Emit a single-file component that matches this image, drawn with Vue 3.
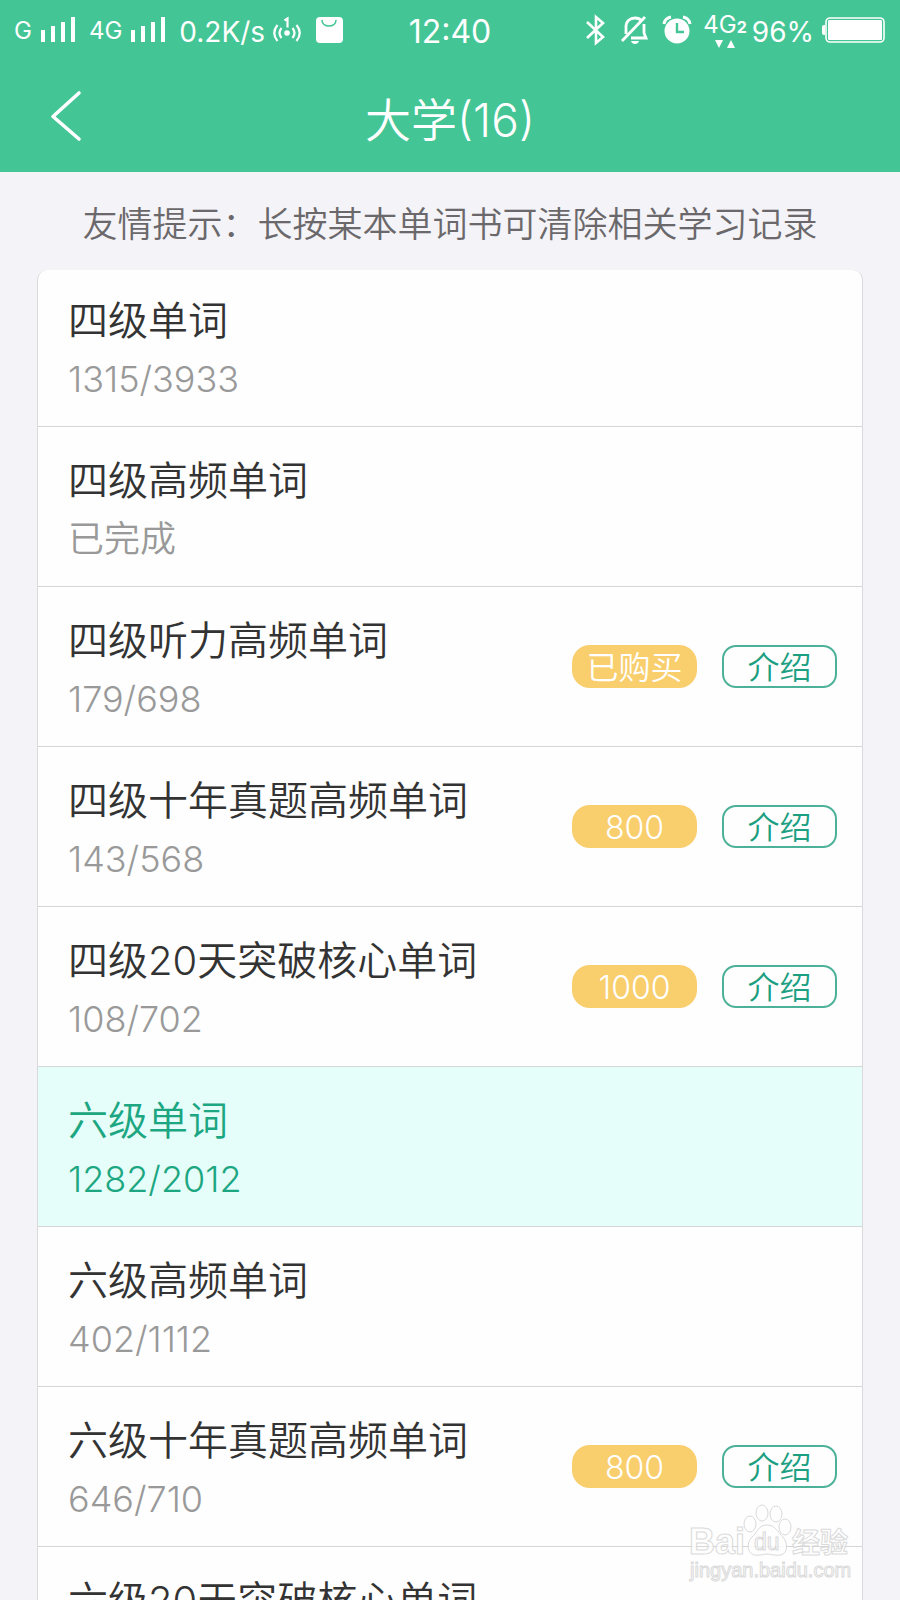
<script setup>
const books = [
  { name: '四级单词', progress: '1315/3933' },
  { name: '四级高频单词', progress: '已完成' },
  { name: '四级听力高频单词', progress: '179/698', price: '已购买' },
  { name: '四级十年真题高频单词', progress: '143/568', price: '800' },
  { name: '四级20天突破核心单词', progress: '108/702', price: '1000' },
  { name: '六级单词', progress: '1282/2012', active: true },
  { name: '六级高频单词', progress: '402/1112' },
  { name: '六级十年真题高频单词', progress: '646/710', price: '800' },
  { name: '六级20天突破核心单词' },
]
</script>

<template>
  <div class="screen">
    <header class="top">
      <div class="status">
        <div class="side">
          <span class="net">G</span>
          <svg class="bars" width="36" height="28" viewBox="0 0 36 28" fill="#fff" aria-hidden="true">
            <path d="M1 14h4v12H1zM11 10h4v16h-4zM21 6h4v20h-4zM31 1h4v25h-4z" />
          </svg>
          <span class="net">4G</span>
          <svg class="bars" width="36" height="28" viewBox="0 0 36 28" fill="#fff" aria-hidden="true">
            <path d="M1 14h4v12H1zM11 10h4v16h-4zM21 6h4v20h-4zM31 1h4v25h-4z" />
          </svg>
          <span class="rate">0.2K/s</span>
          <svg class="hotspot" width="28" height="28" viewBox="0 0 28 28" fill="none" stroke="#fff" stroke-width="2.200" aria-hidden="true">
            <circle cx="14" cy="17" r="2.800" fill="#fff" stroke="none" />
            <path d="M11.500 4.500l3-2v9M8.500 12q-4 5 0 10M4.500 9q-6.500 8 0 16M19.500 12q4 5 0 10M23.500 9q6.500 8 0 16" />
          </svg>
          <svg class="bag" width="28" height="28" viewBox="0 0 28 28" aria-hidden="true">
            <rect x="1" y="1" width="27" height="26" rx="4" fill="#fff" />
            <path d="M7 4c0 8 14 8 14 0" fill="none" stroke="#44c595" stroke-width="1.600" />
          </svg>
        </div>
        <time class="clock">12:40</time>
        <div class="side right">
          <svg width="20" height="34" viewBox="0 0 20 34" fill="none" stroke="#fff" stroke-width="2.600" aria-hidden="true">
            <path d="M1 9l16 15-7 6V4l7 6L1 25" />
          </svg>
          <svg class="bell" width="30" height="30" viewBox="0 0 30 30" fill="none" stroke="#fff" stroke-width="2.800" aria-hidden="true">
            <path d="M6 19V12C6 6 10 3 15 3c2.500 0 4.500.6 6 2M24 9v9l2 5H11M2 26L25 2" />
            <path d="M11 26h8c-1 4-7 4-8 0z" fill="#fff" stroke="none" />
          </svg>
          <svg class="alarm" width="30" height="30" viewBox="0 0 30 30" fill="none" aria-hidden="true">
            <circle cx="15" cy="16" r="12.500" fill="#fff" />
            <path d="M2 9Q3 3 9 2M28 9Q27 3 21 2" stroke="#fff" stroke-width="3" />
            <path d="M15 8v9h7" stroke="#44c595" stroke-width="2.400" />
          </svg>
          <span class="sim">
            <span class="sim-row">4G<b>2</b></span>
            <svg width="20" height="8" viewBox="0 0 20 8" fill="#fff" aria-hidden="true">
              <path d="M0 0h8L4 8zM12 8h8L16 0z" />
            </svg>
          </span>
          <span class="rate">96%</span>
          <svg class="battery" width="65" height="28" viewBox="0 0 65 28" aria-hidden="true">
            <path d="M4 9H3Q1 9 1 11v6q0 2 2 2h1z" fill="#fff" />
            <rect x="5" y="2" width="58" height="24" rx="4" fill="none" stroke="#fff" stroke-width="1.600" />
            <rect x="7" y="4" width="54" height="20" rx="1" fill="#fff" />
          </svg>
        </div>
      </div>
      <nav class="nav">
        <button class="back" type="button" aria-label="返回">
          <svg width="32" height="52" viewBox="0 0 32 52" fill="none" stroke="#fff" stroke-width="3.600" stroke-linecap="round" stroke-linejoin="round">
            <path d="M29 3L3 26.500 29 49" />
          </svg>
        </button>
        <h1>大学(16)</h1>
      </nav>
    </header>

    <main>
      <p class="hint">友情提示：长按某本单词书可清除相关学习记录</p>
      <ul class="list">
        <li v-for="book in books" :key="book.name" class="row" :class="{ active: book.active }">
          <div class="info">
            <h2>{{ book.name }}</h2>
            <p v-if="book.progress">{{ book.progress }}</p>
          </div>
          <div v-if="book.price" class="actions">
            <button class="price" type="button">{{ book.price }}</button>
            <button class="intro" type="button">介绍</button>
          </div>
        </li>
      </ul>
    </main>

    <svg class="mark" width="170" height="84" viewBox="0 0 170 84" aria-hidden="true">
      <g fill="#fff" stroke="#d2d2d2" stroke-width="1">
        <text class="bai" x="2" y="52">Bai</text>
        <text class="jing" x="105" y="51">经验</text>
        <text class="url" x="3" y="75">jingyan.baidu.com</text>
        <ellipse cx="63" cy="22" rx="6" ry="8" />
        <ellipse cx="75" cy="11" rx="6" ry="8" />
        <ellipse cx="89" cy="12" rx="6" ry="8" />
        <ellipse cx="98" cy="25" rx="6" ry="8" />
        <path d="M80 23c-9 0-10 8-15 12-5 5-6 15 2 18 6 1 9-1 13-1s8 2 14 1c7-2 7-12 2-18-5-4-7-12-16-12z" />
        <text class="du" x="67" y="48">du</text>
      </g>
    </svg>
  </div>
</template>

<style>
body {
  background: #f4f3f7;
}
</style>

<style scoped>
.screen {
  position: relative;
  display: flex;
  flex-direction: column;
  height: 100vh;
  overflow: hidden;
  background: #f4f3f7;
  font-family: Inter, "Noto Sans CJK SC", sans-serif;
  font-weight: 350;
}
h1, h2, p, ul {
  margin: 0;
  padding: 0;
  font-weight: inherit;
}
button {
  padding: 0;
  border: 0;
  background: none;
  font: inherit;
  cursor: pointer;
}
svg {
  flex: none;
}
.top {
  flex: none;
  background: #44c595;
  color: #fff;
}
.status {
  display: grid;
  grid-template-columns: 1fr auto 1fr;
  align-items: center;
  height: 60px;
  padding: 0 14px;
  font-weight: 400;
}
.side {
  display: flex;
  align-items: center;
}
.right {
  justify-content: flex-end;
}
.net {
  font-size: 24px;
}
.bars {
  margin: 0 13px 0 8px;
}
.rate {
  padding-top: 3px;
  font-size: 28px;
}
.hotspot {
  margin: 0 14px 0 8px;
}
.clock {
  padding-top: 3px;
  font-size: 32px;
}
.bell {
  margin: 0 12px 0 14px;
}
.sim {
  display: flex;
  flex-direction: column;
  align-items: center;
  margin: 0 5px 0 11px;
}
.sim-row {
  font-size: 24px;
  line-height: 26px;
}
.sim-row b {
  font-size: 16px;
}
.battery {
  margin-left: 7px;
}
.nav {
  position: relative;
  display: flex;
  justify-content: center;
  height: 112px;
}
.back {
  position: absolute;
  left: 50px;
  top: 30px;
  height: 52px;
}
.back svg {
  display: block;
}
h1 {
  font-size: 46px;
  line-height: 120px;
}
.hint {
  padding-top: 26px;
  height: 72px;
  color: #6b686b;
  font-size: 35px;
  line-height: 52px;
  text-align: center;
  white-space: nowrap;
}
.list {
  margin: 0 37px;
  border: 1px solid #d9d9db;
  border-top: 0;
  border-radius: 10px 10px 0 0;
  background: #fefefe;
  list-style: none;
  overflow: hidden;
}
.row {
  display: flex;
  align-items: flex-start;
  justify-content: space-between;
  box-sizing: border-box;
  min-height: 160px;
  padding: 0 25px 0 30px;
  border-bottom: 1px solid #d5d7d7;
}
.info {
  padding-top: 24px;
}
.row:first-child {
  min-height: 157px;
}
.row:first-child .info {
  padding-top: 21px;
}
.active {
  background: #e5fef9;
}
h2 {
  color: #333;
  font-size: 40px;
  line-height: 60px;
}
.info p {
  color: #999;
  font-size: 36px;
  line-height: 56px;
}
.active h2,
.active .info p {
  color: #1ca681;
}
.actions {
  display: flex;
  align-self: center;
  gap: 25px;
}
.price,
.intro {
  box-sizing: border-box;
  height: 43px;
  font-size: 32px;
}
.price {
  width: 125px;
  border-radius: 18px;
  background: #f9ce6d;
  color: #fff;
  line-height: 46px;
}
.intro {
  width: 115px;
  border: 2px solid #4cb198;
  border-radius: 14px;
  color: #1ca081;
  line-height: 42px;
}
.mark {
  position: absolute;
  right: 43px;
  bottom: 14px;
  font-family: "Liberation Sans", "Noto Sans CJK SC", sans-serif;
  opacity: 0.8;
}
.bai {
  font-size: 36px;
  font-weight: 700;
}
.jing {
  font-size: 28px;
  font-weight: 700;
}
.du {
  font-size: 23px;
}
.url {
  font-size: 20px;
  font-weight: 400;
}
</style>
